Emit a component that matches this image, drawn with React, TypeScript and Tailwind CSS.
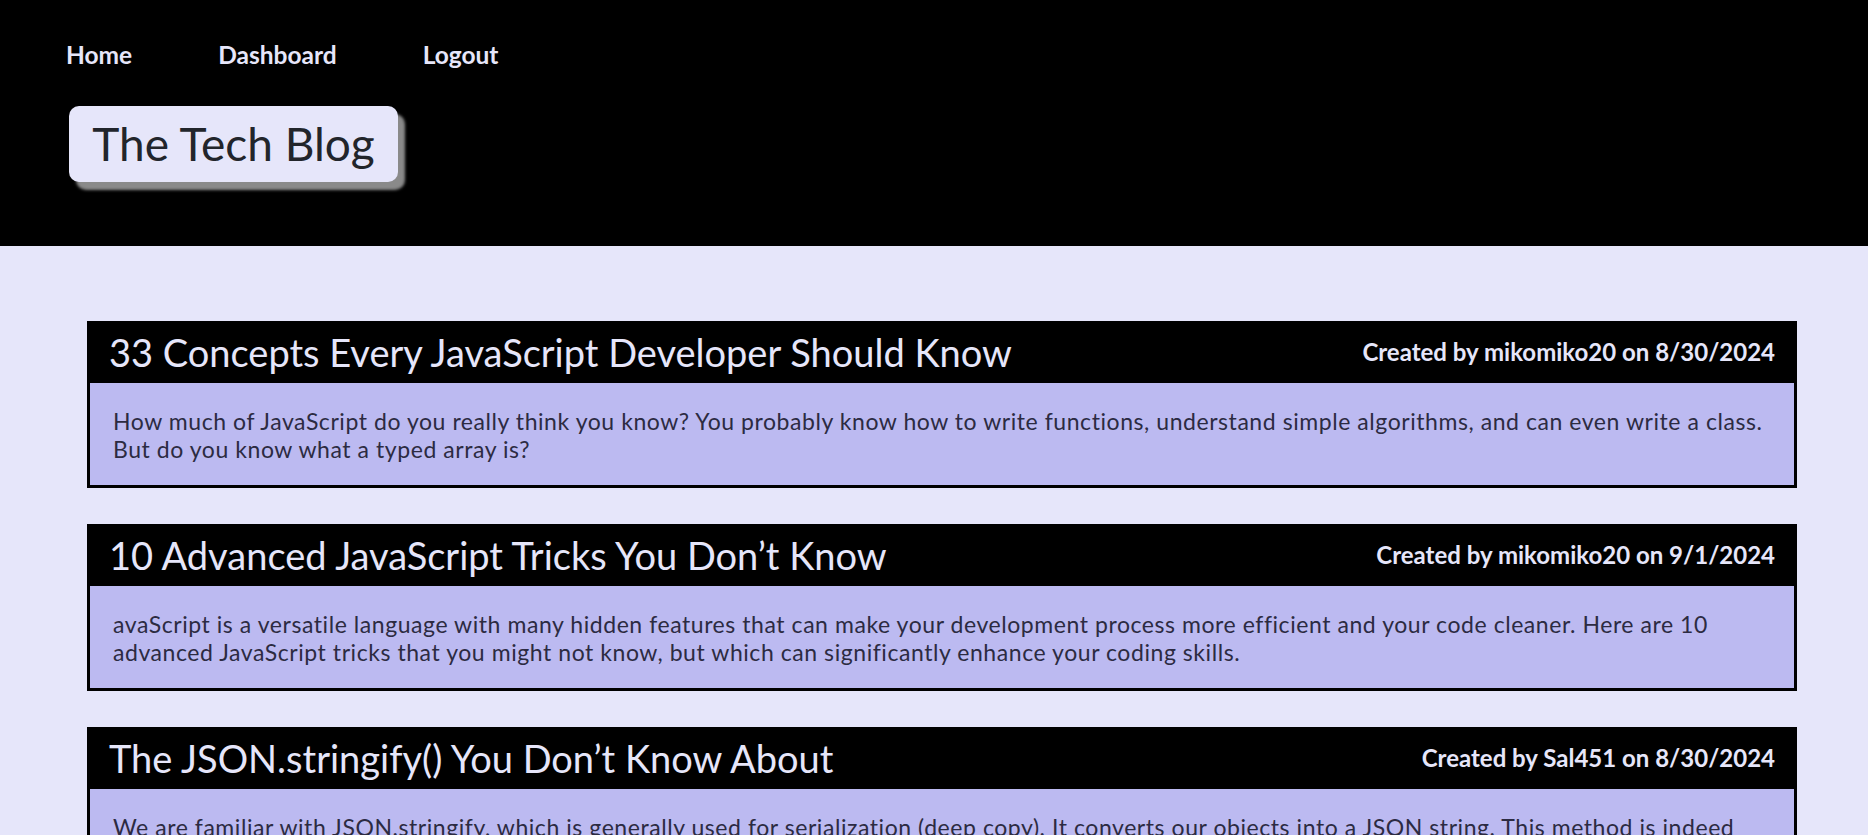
const posts = [
  {
    title: '33 Concepts Every JavaScript Developer Should Know',
    author: 'mikomiko20',
    date: '8/30/2024',
    body: 'How much of JavaScript do you really think you know? You probably know how to write functions, understand simple algorithms, and can even write a class. But do you know what a typed array is?',
  },
  {
    title: '10 Advanced JavaScript Tricks You Don\u2019t Know',
    author: 'mikomiko20',
    date: '9/1/2024',
    body: 'avaScript is a versatile language with many hidden features that can make your development process more efficient and your code cleaner. Here are 10 advanced JavaScript tricks that you might not know, but which can significantly enhance your coding skills.',
  },
  {
    title: 'The JSON.stringify() You Don\u2019t Know About',
    author: 'Sal451',
    date: '8/30/2024',
    body: 'We are familiar with JSON.stringify, which is generally used for serialization (deep copy). It converts our objects into a JSON string. This method is indeed convenient, but it also has some features and pitfalls that many developers never notice.',
  },
];

const App = () => {
  return (
    <main className="w-full min-h-screen bg-[#e6e6fa] flex flex-col font-['Lato',sans-serif]">
      {/* Header */}
      <header className="bg-black h-[246px] w-full">
        <nav className="flex flex-row gap-[86px] pl-[66px] pt-[43px]">
          <a href="/" className="text-[24.5px] leading-[24px] font-bold text-[#e6e6fa]">Home</a>
          <a href="/dashboard" className="text-[24.5px] leading-[24px] font-bold text-[#e6e6fa]">Dashboard</a>
          <a href="/logout" className="text-[24.5px] leading-[24px] font-bold text-[#e6e6fa]">Logout</a>
        </nav>

        {/* Logo box */}
        <div className="ml-[69px] mt-[39px] w-[329px] h-[76px] flex items-center justify-center bg-[#e6e6fa] rounded-[10px] shadow-[7px_8px_3px_#8a8a8a]">
          <h1 className="text-[46px] leading-[46px] text-[#22252b]">The Tech Blog</h1>
        </div>
      </header>

      {/* Posts */}
      <section className="flex flex-col gap-[36px] pt-[75px] pb-10 pl-[87px] pr-[71px]">
        {posts.map((post) => (
          <article key={post.title} className="flex flex-col">
            <div className="bg-black h-[62px] flex flex-row items-center justify-between pl-[22px] pr-[22px]">
              <h2 className="text-[38px] leading-[38px] text-[#e6e6fa]">{post.title}</h2>
              <p className="text-[24px] leading-[24px] font-bold text-[#e6e6fa]">
                Created by {post.author} on {post.date}
              </p>
            </div>
            <div className="bg-[#bcbaf1] border-[3px] border-t-0 border-black pl-[23px] pr-[20px] pt-[24px] pb-[22px]">
              <p className="text-[23px] leading-[28px] tracking-[0.56px] text-[#2c2b42]">{post.body}</p>
            </div>
          </article>
        ))}
      </section>
    </main>
  );
};

export default App;
